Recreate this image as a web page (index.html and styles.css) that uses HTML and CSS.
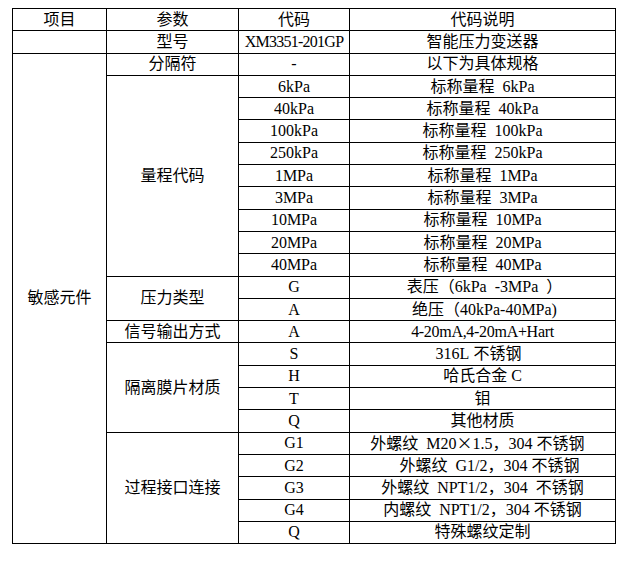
FILE: index.html
```html
<!DOCTYPE html>
<html lang="zh-CN">
<head>
<meta charset="utf-8">
<title>参数表</title>
<link rel="stylesheet" href="styles.css">
</head>
<body>
<table class="spec">
  <colgroup>
    <col class="c1"><col class="c2"><col class="c3"><col class="c4">
  </colgroup>
  <tbody>
    <tr><td>项目</td><td>参数</td><td>代码</td><td>代码说明</td></tr>
    <tr><td></td><td>型号</td><td><span class="tight">XM3351-201GP</span></td><td>智能压力变送器</td></tr>
    <tr><td rowspan="22">敏感元件</td><td>分隔符</td><td>-</td><td>以下为具体规格</td></tr>
    <tr><td rowspan="9">量程代码</td><td>6kPa</td><td>标称量程 6kPa</td></tr>
    <tr><td>40kPa</td><td>标称量程 40kPa</td></tr>
    <tr><td>100kPa</td><td>标称量程 100kPa</td></tr>
    <tr><td>250kPa</td><td>标称量程 250kPa</td></tr>
    <tr><td>1MPa</td><td>标称量程 1MPa</td></tr>
    <tr><td>3MPa</td><td>标称量程 3MPa</td></tr>
    <tr><td>10MPa</td><td>标称量程 10MPa</td></tr>
    <tr><td>20MPa</td><td>标称量程 20MPa</td></tr>
    <tr><td>40MPa</td><td>标称量程 40MPa</td></tr>
    <tr><td rowspan="2">压力类型</td><td>G</td><td class="pl1">表压（6kPa -3MPa ）</td></tr>
    <tr><td>A</td><td class="pl1">绝压（40kPa-40MPa)</td></tr>
    <tr><td>信号输出方式</td><td>A</td><td><span class="snug">4-20mA,4-20mA+Hart</span></td></tr>
    <tr><td rowspan="4">隔离膜片材质</td><td>S</td><td class="pr"><span class="gr">316L</span>不锈钢</td></tr>
    <tr><td>H</td><td>哈氏合金<span class="gl">C</span></td></tr>
    <tr><td>T</td><td>钼</td></tr>
    <tr><td>Q</td><td>其他材质</td></tr>
    <tr><td rowspan="5">过程接口连接</td><td>G1</td><td class="pr2">外螺纹 M20<span class="fw">×</span>1.5，<span class="gr">304</span>不锈钢</td></tr>
    <tr><td>G2</td><td class="pl">外螺纹 G1/2，<span class="gr">304</span>不锈钢</td></tr>
    <tr><td>G3</td><td>外螺纹 NPT1/2，304 不锈钢</td></tr>
    <tr><td>G4</td><td>内螺纹 NPT1/2，<span class="gr">304</span>不锈钢</td></tr>
    <tr><td>Q</td><td>特殊螺纹定制</td></tr>
  </tbody>
</table>
</body>
</html>
```

FILE: styles.css
```css
html, body {
  background: #ffffff;
}

body {
  margin: 8px 0 0 12px;
}

.spec {
  border-collapse: collapse;
  table-layout: fixed;
  width: 604px;
  font-family: "Liberation Serif", "Noto Sans CJK SC", serif;
  font-size: 16px;
  word-spacing: 4px;
  color: #000000;
}

.c1 { width: 94px; }
.c2 { width: 132px; }
.c3 { width: 111px; }
.c4 { width: 266px; }

.spec tr {
  height: 22.3px;
}

.spec td {
  border: 1px solid #000000;
  padding: 0;
  text-align: center;
  vertical-align: middle;
  line-height: 18px;
  white-space: pre;
}

.tight { letter-spacing: -0.75px; }
.snug { letter-spacing: -0.3px; }

.gr { margin-right: 4px; }
.gl { margin-left: 4px; }

.fw {
  display: inline-block;
  width: 16px;
  text-align: center;
  font-family: "Noto Sans CJK SC", sans-serif;
}

.spec td.pr { padding-right: 8px; }
.spec td.pr2 { padding-right: 10px; }
.spec td.pl { padding-left: 14px; }
.spec td.pl1 { padding-left: 4px; }
```
